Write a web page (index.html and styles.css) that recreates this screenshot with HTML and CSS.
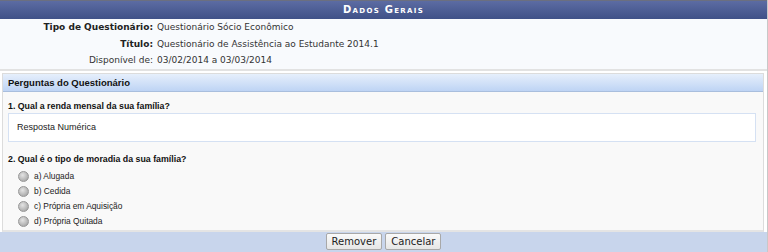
FILE: index.html
```html
<!DOCTYPE html>
<html lang="pt-BR">
<head>
    <meta charset="UTF-8">
    <title>Dados Gerais</title>
    <link rel="stylesheet" href="styles.css">
</head>
<body>
    <div class="formulario">
        <div class="caption">Dados Gerais</div>

        <div class="dados">
            <div class="linha">
                <span class="rotulo">Tipo de Questionário:</span>
                <span class="valor">Questionário Sócio Econômico</span>
            </div>
            <div class="linha">
                <span class="rotulo">Título:</span>
                <span class="valor">Questionário de Assistência ao Estudante 2014.1</span>
            </div>
            <div class="linha">
                <span class="rotulo normal">Disponível de:</span>
                <span class="valor">03/02/2014 a 03/03/2014</span>
            </div>
        </div>

        <div class="perguntas">
            <div class="subcaption">Perguntas do Questionário</div>

            <div class="pergunta">1. Qual a renda mensal da sua família?</div>
            <div class="resposta">Resposta Numérica</div>

            <div class="pergunta segunda">2. Qual é o tipo de moradia da sua família?</div>
            <ul class="alternativas">
                <li><span class="radio"></span>a) Alugada</li>
                <li><span class="radio"></span>b) Cedida</li>
                <li><span class="radio"></span>c) Própria em Aquisição</li>
                <li><span class="radio"></span>d) Própria Quitada</li>
            </ul>
        </div>

        <div class="rodape">
            <button type="button">Remover</button>
            <button type="button">Cancelar</button>
        </div>
    </div>
</body>
</html>
```

FILE: styles.css
```css
body {
    margin: 0;
    background-color: #fff;
    font-family: "DejaVu Sans", Verdana, sans-serif;
    font-size: 9px;
    color: #222;
}

.formulario {
    width: 767px;
    border-right: 1px solid #c8c8c8;
    height: 252px;
    display: flex;
    flex-direction: column;
}

.caption {
    height: 18px;
    line-height: 18px;
    border-top: 1px solid #6b6f80;
    background: linear-gradient(#5c6ca3, #3f5188);
    color: #fff;
    font-weight: bold;
    font-variant: small-caps;
    letter-spacing: 1.3px;
    text-align: center;
    font-size: 10px;
}

.dados {
    background-color: #f8fafd;
    padding: 0;
    border-bottom: 2px solid #e2e2e2;
}

.linha {
    display: flex;
    height: 16.5px;
    line-height: 16.5px;
}

.rotulo {
    width: 153px;
    text-align: right;
    font-weight: bold;
    color: #222;
}

.rotulo.normal {
    font-weight: normal;
    color: #333;
}

.valor {
    padding-left: 4px;
    color: #333;
}

.perguntas {
    flex: 1;
    margin: 2px 3px 0 2px;
    border: 1px solid #dcdcdc;
    border-bottom: 2px solid #e4e4e4;
    background-color: #f9f9f9;
    font-family: "Liberation Sans", Arial, sans-serif;
}

.subcaption {
    height: 17px;
    line-height: 17px;
    padding-left: 5px;
    background: linear-gradient(#e6effc, #bed4f4);
    border-bottom: 1px solid #a9bedd;
    font-weight: bold;
    font-size: 9.5px;
    color: #111;
}

.pergunta {
    font-weight: bold;
    font-size: 8.8px;
    color: #111;
    padding-left: 5px;
    margin-top: 8px;
    line-height: 13px;
}

.pergunta.segunda {
    margin-top: 11px;
}

.resposta {
    margin: 0 7px 0 5px;
    height: 27px;
    line-height: 27px;
    padding-left: 8px;
    background-color: #fff;
    border: 1px solid #d5e1f3;
    color: #222;
}

.alternativas {
    list-style: none;
    margin: 3px 0 0;
    padding: 0 0 0 15px;
}

.alternativas li {
    display: flex;
    align-items: center;
    height: 15px;
    font-size: 8.4px;
    color: #222;
}

.radio {
    width: 11px;
    height: 11px;
    border-radius: 50%;
    margin-right: 5px;
    border: 1px solid #979797;
    box-sizing: border-box;
    background: radial-gradient(circle at 40% 35%, #e4e4e4, #b0b0b0 70%, #959595);
}

.rodape {
    height: 20px;
    background-color: #c8d5ec;
    display: flex;
    justify-content: center;
    align-items: flex-start;
    gap: 3px;
    padding-top: 1px;
    box-sizing: border-box;
}

button {
    font-family: "DejaVu Sans", Verdana, sans-serif;
    font-size: 10px;
    color: #222;
    height: 17px;
    padding: 0 5px;
    background: linear-gradient(#fafafa, #e6e6e6);
    border: 1px solid #a8a8a8;
    border-radius: 2px;
}
```
